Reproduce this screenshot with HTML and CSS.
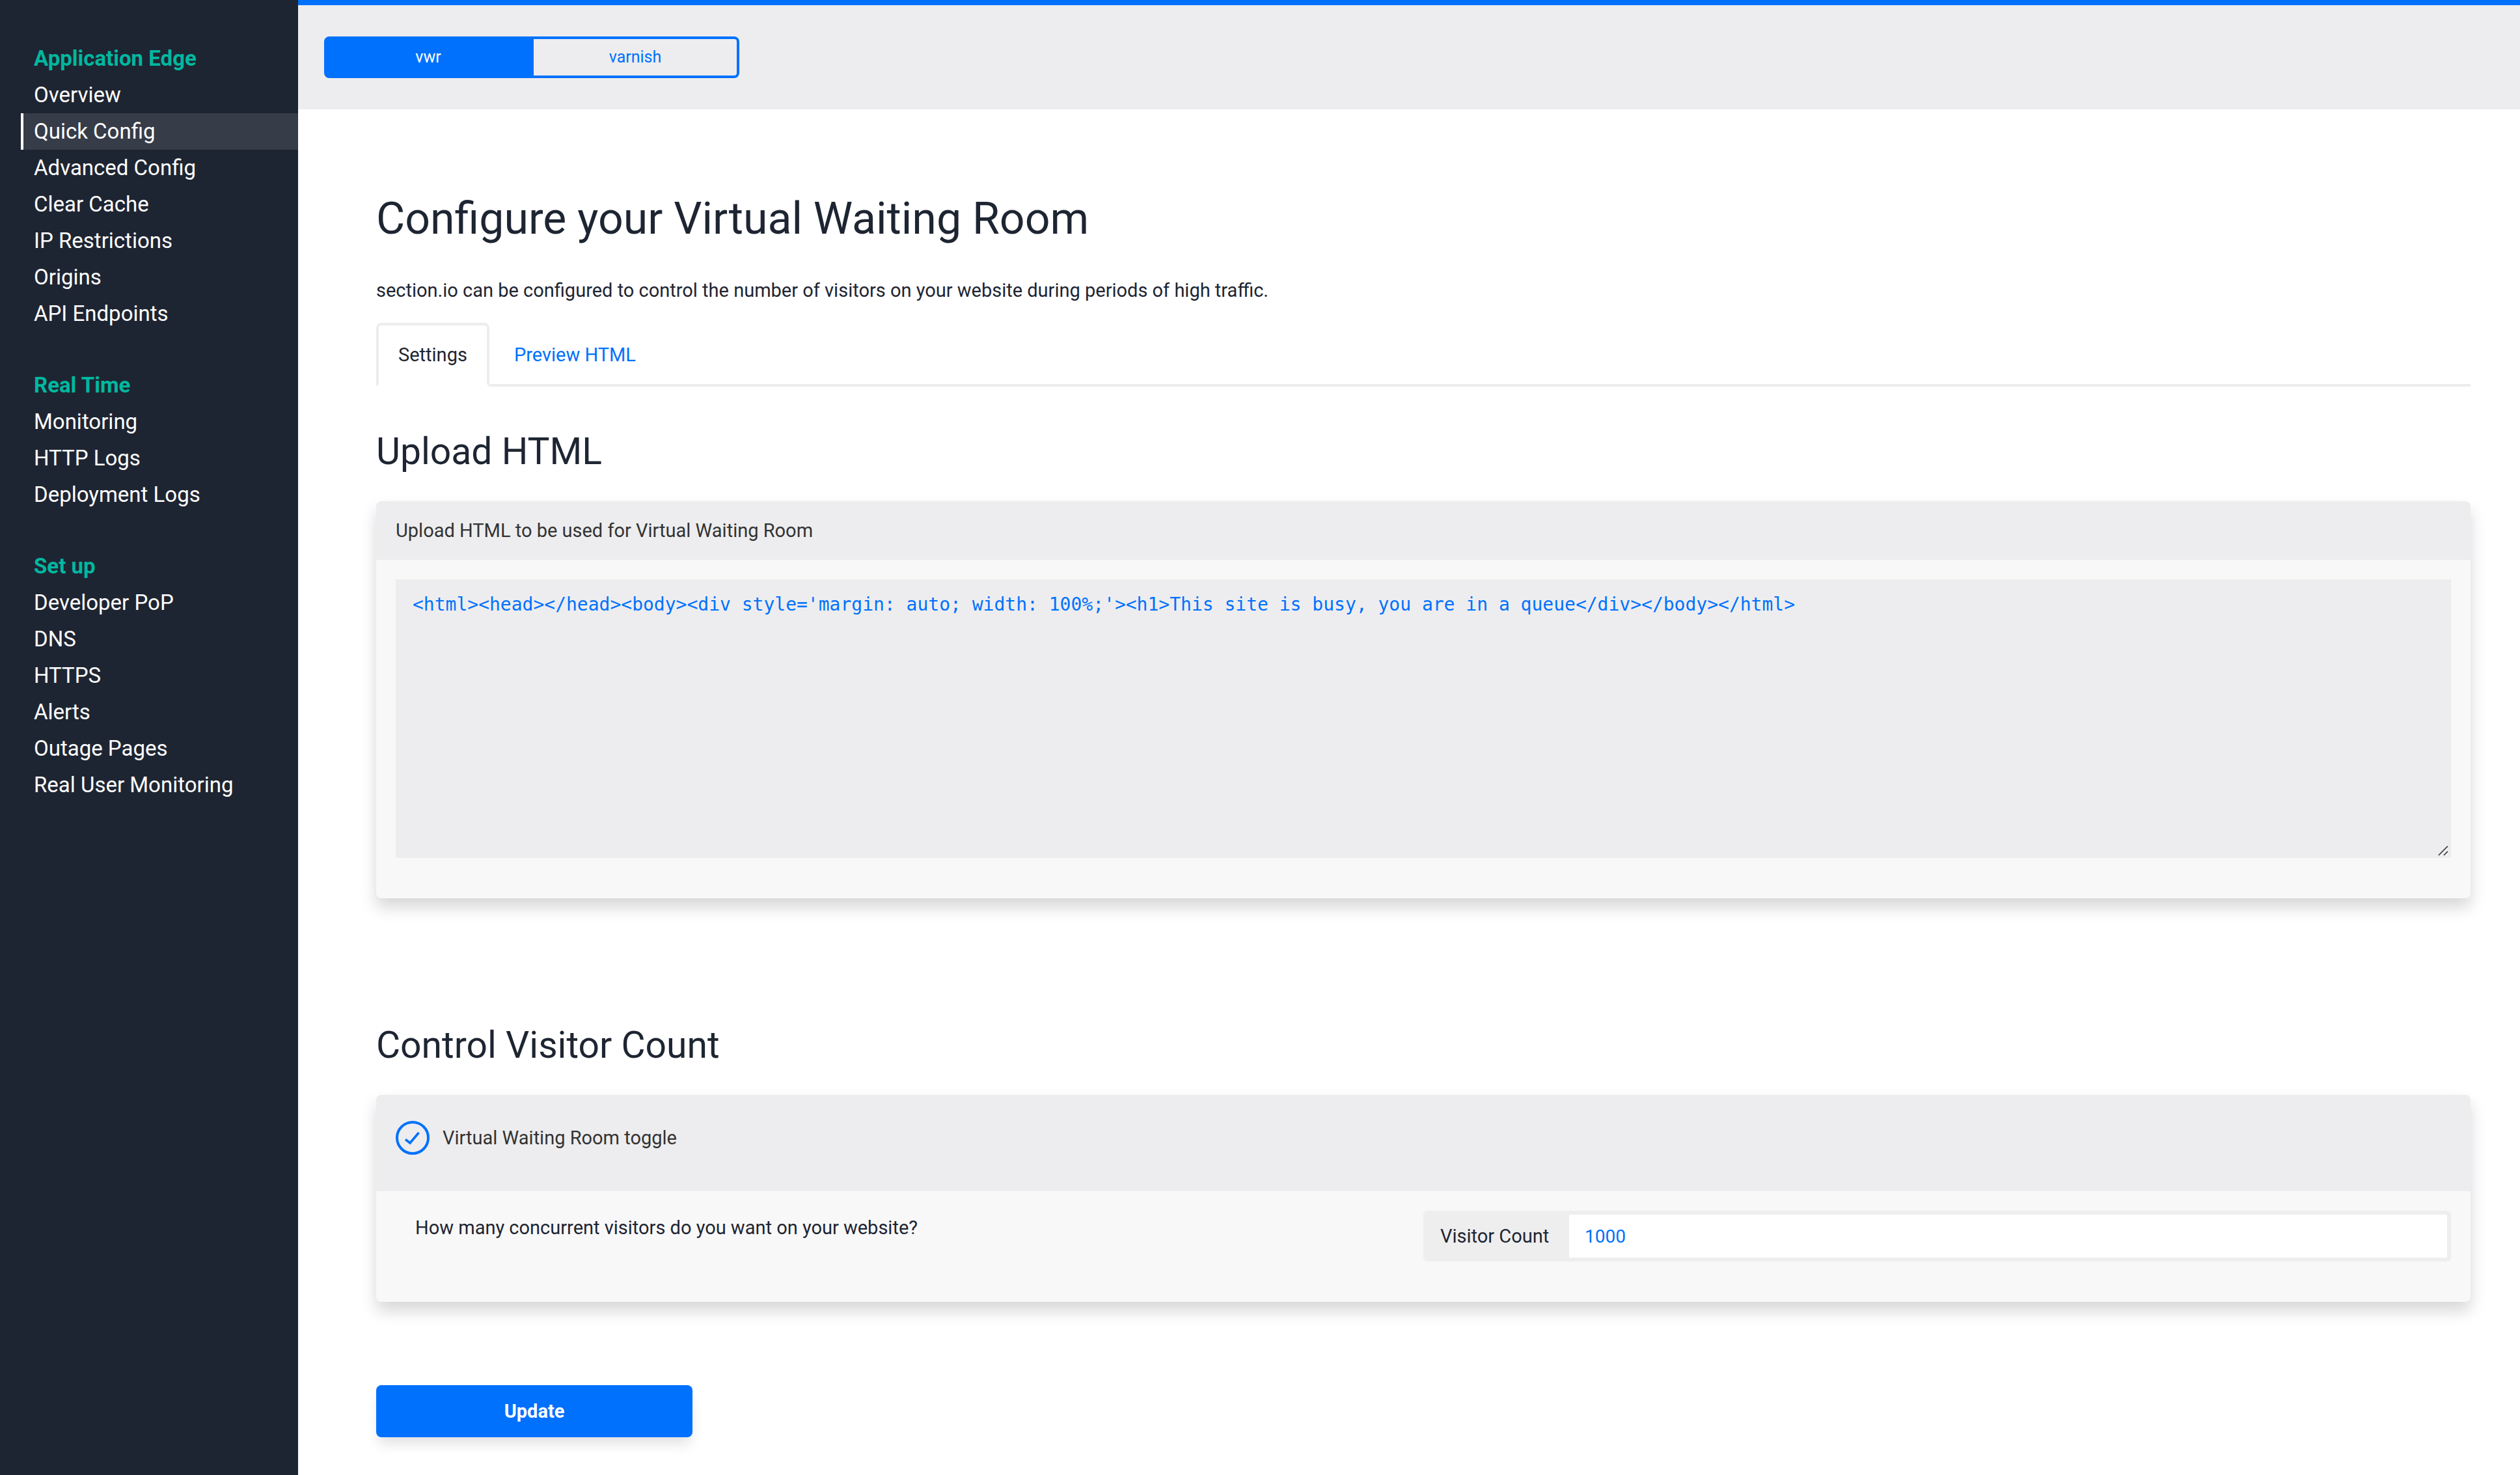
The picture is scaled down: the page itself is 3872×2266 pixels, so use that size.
FILE: index.html
```html
<!DOCTYPE html>
<html lang="en">
<head>
<meta charset="utf-8">
<meta name="viewport" content="width=device-width, initial-scale=1">
<title>Virtual Waiting Room – Quick Config</title>
<link rel="stylesheet" href="styles.css">
</head>
<body>
<div class="app">
  <nav class="sidebar" aria-label="Main">
    <section class="nav-group">
      <h2 class="nav-title">Application Edge</h2>
      <a class="nav-link" href="#overview">Overview</a>
      <a class="nav-link nav-link-active" href="#quick-config" aria-current="page">Quick Config</a>
      <a class="nav-link" href="#advanced-config">Advanced Config</a>
      <a class="nav-link" href="#clear-cache">Clear Cache</a>
      <a class="nav-link" href="#ip-restrictions">IP Restrictions</a>
      <a class="nav-link" href="#origins">Origins</a>
      <a class="nav-link" href="#api-endpoints">API Endpoints</a>
    </section>
    <section class="nav-group">
      <h2 class="nav-title">Real Time</h2>
      <a class="nav-link" href="#monitoring">Monitoring</a>
      <a class="nav-link" href="#http-logs">HTTP Logs</a>
      <a class="nav-link" href="#deployment-logs">Deployment Logs</a>
    </section>
    <section class="nav-group">
      <h2 class="nav-title">Set up</h2>
      <a class="nav-link" href="#developer-pop">Developer PoP</a>
      <a class="nav-link" href="#dns">DNS</a>
      <a class="nav-link" href="#https">HTTPS</a>
      <a class="nav-link" href="#alerts">Alerts</a>
      <a class="nav-link" href="#outage-pages">Outage Pages</a>
      <a class="nav-link" href="#real-user-monitoring">Real User Monitoring</a>
    </section>
  </nav>

  <main class="main">
    <header class="topbar">
      <div class="segmented">
        <button class="segment segment-active" type="button">vwr</button>
        <button class="segment" type="button">varnish</button>
      </div>
    </header>

    <form class="content">
      <h1 class="page-title">Configure your Virtual Waiting Room</h1>
      <p class="intro">section.io can be configured to control the number of visitors on your website during periods of high traffic.</p>

      <div class="tabs">
        <a class="tab tab-active" href="#settings">Settings</a>
        <a class="tab" href="#preview">Preview HTML</a>
      </div>

      <h2 class="section-title">Upload HTML</h2>
      <section class="panel">
        <div class="panel-head"><label for="html-source">Upload HTML to be used for Virtual Waiting Room</label></div>
        <div class="panel-body">
          <div class="editor">
            <textarea class="editor-text" id="html-source" spellcheck="false">&lt;html&gt;&lt;head&gt;&lt;/head&gt;&lt;body&gt;&lt;div style='margin: auto; width: 100%;'&gt;&lt;h1&gt;This site is busy, you are in a queue&lt;/div&gt;&lt;/body&gt;&lt;/html&gt;</textarea>
            <svg class="editor-grip" viewBox="0 0 16 16" aria-hidden="true"><path d="M2 16 15 3M10 16l5-5" stroke="#fff" stroke-width="2"/><path d="M1 15 15 1M9 15l6-6" stroke="#555" stroke-width="2"/></svg>
          </div>
        </div>
      </section>

      <h2 class="section-title section-title-later">Control Visitor Count</h2>
      <section class="panel">
        <div class="panel-head panel-head-toggle">
          <label class="toggle">
            <span class="toggle-mark">
              <input class="toggle-input" type="checkbox" checked>
              <svg class="toggle-check" viewBox="0 0 52 52" aria-hidden="true"><path d="M15 28.500 22 34 35.500 18" fill="none" stroke="#0071fc" stroke-width="3.600"/></svg>
            </span>
            <span>Virtual Waiting Room toggle</span>
          </label>
        </div>
        <div class="panel-body panel-split">
          <p class="question">How many concurrent visitors do you want on your website?</p>
          <div class="field">
            <label class="field-label" for="visitor-count">Visitor Count</label>
            <input class="field-input" id="visitor-count" type="text" inputmode="numeric" value="1000">
          </div>
        </div>
      </section>

      <button class="update" type="button">Update</button>
    </form>
  </main>
</div>
</body>
</html>
```
FILE: styles.css
```css
:root {
  --blue: #0071fc;
  --navy: #1e2532;
  --green: #00b8a0;
  --grey: #ededef;
  --panel: #f8f8f8;
}

*, *::before, *::after { box-sizing: border-box; }

body {
  margin: 0;
  background: #fff;
  color: var(--navy);
  font: 400 29px/40px Roboto, "Liberation Sans", sans-serif;
}

h1, h2, p { margin: 0; font-weight: 400; }
a { color: inherit; text-decoration: none; }
button, input, textarea { margin: 0; font: inherit; }

.app {
  display: grid;
  grid-template-columns: 458px minmax(0, 1fr);
  min-height: 100vh;
}

/* Sidebar */
.sidebar {
  display: flex;
  flex-direction: column;
  gap: 54px;
  padding: 62px 0 54px 32px;
  background: var(--navy);
  color: #fff;
  font-size: 33px;
  line-height: 56px;
}
.nav-group { display: flex; flex-direction: column; }
.nav-title {
  padding-left: 20px;
  color: var(--green);
  font-size: 33px;
  font-weight: 700;
}
.nav-link { padding-left: 16px; border-left: 4px solid transparent; }
.nav-link-active { border-left-color: #fff; background: #363c48; }

/* Proxy switcher */
.topbar {
  padding: 48px 40px;
  border-top: 8px solid var(--blue);
  background: var(--grey);
}
.segmented { display: flex; width: 638px; }
.segment {
  flex: 1;
  height: 64px;
  padding: 0;
  border: 4px solid var(--blue);
  border-radius: 0 8px 8px 0;
  border-left-width: 2px;
  background: transparent;
  color: var(--blue);
  font-size: 25px;
  line-height: 32px;
}
.segment-active {
  border-left-width: 4px;
  border-radius: 8px 0 0 8px;
  background: var(--blue);
  color: #fff;
}

/* Content */
.content { padding: 128px 76px 48px 120px; }
.page-title { font-size: 68px; line-height: 80px; }
.intro { margin-top: 50px; }

.tabs {
  display: flex;
  gap: 4px;
  margin-top: 30px;
  border-bottom: 4px solid var(--grey);
}
.tab {
  margin-bottom: -4px;
  padding: 25px 30px;
  border: 4px solid transparent;
  border-radius: 8px 8px 0 0;
  color: var(--blue);
}
.tab-active {
  border-color: var(--grey) var(--grey) #fff;
  color: var(--navy);
}

.section-title { margin: 68px 0 44px; font-size: 57px; line-height: 64px; }
.section-title-later { margin-top: 194px; }

.panel {
  border-radius: 8px;
  background: var(--panel);
  box-shadow: 0 14px 24px rgba(0, 0, 0, .16);
}
.panel-head {
  padding: 25px 30px;
  border-radius: 8px 8px 0 0;
  background: var(--grey);
  color: #333;
}
.panel-head-toggle { padding: 40px 30px 56px; }
.panel-body { padding: 30px 30px 62px; }

.editor { position: relative; display: flex; }
.editor-text {
  flex: 1;
  height: 428px;
  padding: 22px 26px;
  border: 0;
  background: var(--grey);
  color: var(--blue);
  font: 28px/34px "DejaVu Sans Mono", monospace;
  resize: none;
}
.editor-grip {
  position: absolute;
  right: 4px;
  bottom: 3px;
  width: 16px;
  height: 16px;
}

.toggle { display: flex; align-items: center; gap: 20px; }
.toggle-mark { position: relative; display: flex; }
.toggle-input {
  width: 52px;
  height: 52px;
  border: 4px solid var(--blue);
  border-radius: 50%;
  appearance: none;
}
.toggle-check {
  position: absolute;
  inset: 0;
  visibility: hidden;
  pointer-events: none;
}
.toggle-input:checked + .toggle-check { visibility: visible; }

.panel-split { display: grid; grid-template-columns: 1fr 1fr; }
.question { padding: 6px 30px; }
.field {
  display: flex;
  align-items: center;
  padding: 6px;
  border-radius: 6px;
  background: #eee;
}
.field-label { width: 218px; padding-left: 20px; }
.field-input {
  flex: 1;
  min-width: 0;
  height: 66px;
  padding: 0 24px;
  border: 0;
  background: #fff;
  color: var(--blue);
  font-size: 28px;
}

.update {
  display: block;
  width: 486px;
  height: 80px;
  margin-top: 128px;
  border: 0;
  border-radius: 8px;
  background: var(--blue);
  box-shadow: 0 14px 20px -4px rgba(0, 0, 0, .12);
  color: #fff;
  font-weight: 700;
}
```
